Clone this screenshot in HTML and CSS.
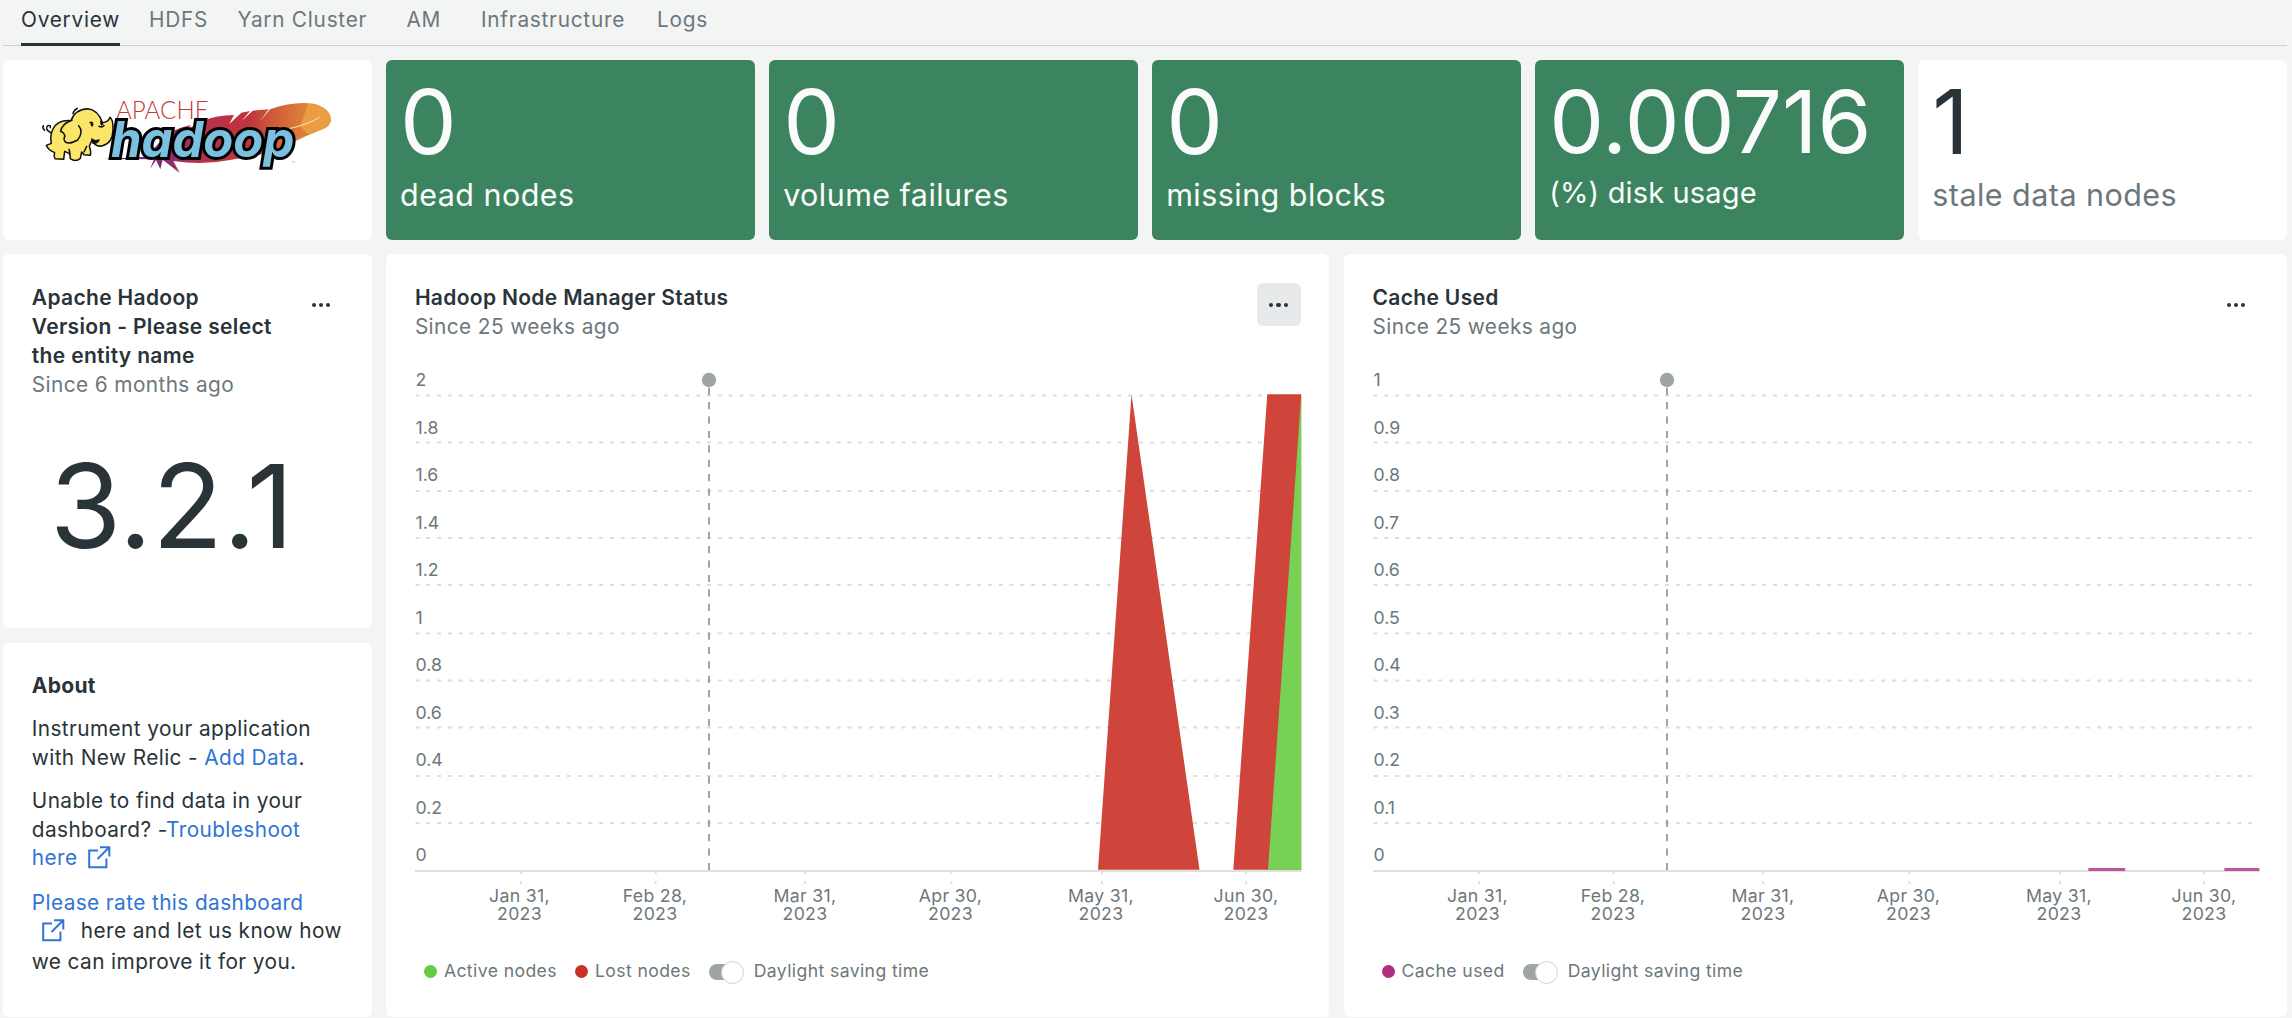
FILE: index.html
```html
<!DOCTYPE html>
<html lang="en">
<head>
<meta charset="utf-8">
<title>Hadoop dashboard</title>
<link rel="stylesheet" href="styles.css">
</head>
<body>
<nav class="tabs">
  <a class="tab active">Overview</a><a class="tab">HDFS</a><a class="tab">Yarn Cluster</a><a class="tab">AM</a><a class="tab">Infrastructure</a><a class="tab">Logs</a>
</nav>
<main class="board">
  <section class="row stats">
    <div class="card logo-card">
      <svg class="logo" viewBox="0 0 930 330" role="img" aria-label="Apache Hadoop">
        <defs>
          <linearGradient id="feather" x1="220" y1="0" x2="904" y2="0" gradientUnits="userSpaceOnUse">
            <stop offset="0" stop-color="#5b2c83"/><stop offset=".25" stop-color="#7d2a80"/><stop offset=".4" stop-color="#b52f50"/><stop offset=".64" stop-color="#c0343c"/><stop offset=".74" stop-color="#cf5a38"/><stop offset=".88" stop-color="#dd7f3b"/><stop offset="1" stop-color="#e58f3c"/>
          </linearGradient>
        </defs>
        <path fill="url(#feather)" d="M220 237 L350 230 L418 154 L436 146 L428 154 L450 144 L482 135 L474 146 L520 122 Q560 106 612 105 L598 132 L634 98 L660 93 L634 124 L668 92 L716 88 L690 124 L720 88 Q790 63 850 71 Q899 82 903 119 Q902 140 870 151 Q820 171 790 187 L700 222 L600 240 Q520 256 430 243 L449 279 L398 239 L391 268 L378 240 L360 267 L372 238 Z"/>
        <path fill="#ea9d42" d="M834 71 Q899 78 903 119 Q902 140 870 151 L836 164 L811 139 Z"/>
        <path fill="none" stroke="#f8e4c4" stroke-width="3" d="M770 148 Q835 133 869 112"/>
        <g stroke="#111" stroke-width="4.5" stroke-linejoin="round" stroke-linecap="round">
          <path fill="none" d="M62 158 Q43 147 53 137 Q63 134 61 143 M44 151 Q36 145 40 137 M129 101 Q130 92 139 88 M134 90 L142 85"/>
          <path fill="#fbe66a" d="M123 122 Q134 88 174 86 Q205 90 217 128 Q235 127 240 112 Q250 118 249 150 Q248 190 216 198 Q194 201 186 180 L178 199 Q184 216 181 226 L162 224 L155 216 L151 235 Q137 247 121 236 L119 221 L104 214 L101 238 L75 236 Q70 228 74 218 Q54 210 49 196 L64 190 Q59 166 69 147 Q83 119 123 122 Z"/>
          <path fill="#fbe66a" d="M126 121 Q94 132 92 155 Q100 154 105 168 Q99 178 106 186 Q119 194 143 180 Q162 155 146 137"/>
          <path fill="#111" d="M186 177 Q193 185 207 180 Q200 193 189 189 Z"/>
          <path fill="none" d="M117 208 Q120 214 119 224 M170 199 L162 216 M207 139 Q216 143 222 137 M180 128 Q184 125 187 128 M212 124 L218 133"/>
        </g>
        <ellipse cx="186" cy="133" rx="4" ry="7" fill="#111"/><ellipse cx="215" cy="130" rx="4" ry="7" fill="#111"/>
        <text class="logo-apache" x="258" y="117" textLength="278" lengthAdjust="spacingAndGlyphs">APACHE</text>
        <text class="logo-word" x="243" y="232" textLength="550" lengthAdjust="spacingAndGlyphs">hadoop</text>
        <text class="logo-tm" x="783" y="250">TM</text>
      </svg>
    </div>
    <div class="card stat good"><div class="value">0</div><div class="label">dead nodes</div></div>
    <div class="card stat good"><div class="value">0</div><div class="label">volume failures</div></div>
    <div class="card stat good"><div class="value">0</div><div class="label">missing blocks</div></div>
    <div class="card stat good long"><div class="value">0.00716</div><div class="label">(%) disk usage</div></div>
    <div class="card stat"><div class="value">1</div><div class="label">stale data nodes</div></div>
  </section>
  <section class="row lower">
    <div class="side">
      <div class="card panel">
        <header class="head">
          <div class="titles"><h2>Apache Hadoop<br>Version - Please select<br>the entity name</h2><p class="since">Since 6 months ago</p></div>
          <button class="more" aria-label="More"><i></i><i></i><i></i></button>
        </header>
        <div class="version">3.2.1</div>
      </div>
      <div class="card panel about">
        <h3>About</h3>
        <p>Instrument your application<br>with New Relic - <a>Add Data</a>.</p>
        <p>Unable to find data in your<br>dashboard? -<a>Troubleshoot<br>here <svg class="ext" viewBox="0 0 23 23"><path d="M10 4.5H1.2V21.3H18.4V12.5M12 1.2H21.3V10.5M21 1.5L9.5 13"/></svg></a></p>
        <p class="rate"><a>Please rate this dashboard<br><svg class="ext lead" viewBox="0 0 23 23"><path d="M10 4.5H1.2V21.3H18.4V12.5M12 1.2H21.3V10.5M21 1.5L9.5 13"/></svg></a><span class="after">here and let us know how</span><br><span class="last">we can improve it for you.</span></p>
      </div>
    </div>
    <div class="card panel">
      <header class="head">
        <div class="titles"><h2>Hadoop Node Manager Status</h2><p class="since">Since 25 weeks ago</p></div>
        <button class="more hover" aria-label="More"><i></i><i></i><i></i></button>
      </header>
      <svg class="chart" viewBox="415 370 887 560">
        <defs>
          <g id="frame">
            <path class="grid" d="M415.500 395.500H1294M415.500 442.500H1294M415.500 491H1294M415.500 538H1294M415.500 585H1294M415.500 633.500H1294M415.500 680.500H1294M415.500 727.500H1294M415.500 776H1294M415.500 823H1294"/>
            <path class="axis" d="M415 871H1301.500M521 871V874M521 881V884M655.600 871V874M655.600 881V884M805.200 871V874M805.200 881V884M951.400 871V874M951.400 881V884M1102 871V874M1102 881V884M1246.200 871V874M1246.200 881V884"/>
            <path class="marker" d="M709 387.700V870"/>
            <circle class="marker-dot" cx="709" cy="380" r="7.200"/>
          </g>
        </defs>
        <use href="#frame"/>
        <path class="lost" d="M1098 869.700L1131.500 394.500L1199.500 869.700ZM1233.300 869.700L1267.300 394.300H1301.200V869.700Z"/>
        <path class="active-area" d="M1268 869.700L1301.200 395V869.700Z"/>
        <g class="y">
          <text x="415.500" y="386">2</text><text x="415.500" y="434">1.8</text><text x="415.500" y="481">1.6</text><text x="415.500" y="529">1.4</text><text x="415.500" y="576">1.2</text><text x="415.500" y="624">1</text><text x="415.500" y="671">0.8</text><text x="415.500" y="719">0.6</text><text x="415.500" y="766">0.4</text><text x="415.500" y="814">0.2</text><text x="415.500" y="861">0</text>
        </g>
        <g class="x">
          <text x="519.500" y="902">Jan 31,</text><text x="519.500" y="920">2023</text>
          <text x="655" y="902">Feb 28,</text><text x="655" y="920">2023</text>
          <text x="805" y="902">Mar 31,</text><text x="805" y="920">2023</text>
          <text x="950.500" y="902">Apr 30,</text><text x="950.500" y="920">2023</text>
          <text x="1101" y="902">May 31,</text><text x="1101" y="920">2023</text>
          <text x="1246" y="902">Jun 30,</text><text x="1246" y="920">2023</text>
        </g>
      </svg>
      <div class="legend">
        <span class="item green">Active nodes</span><span class="item red">Lost nodes</span><span class="toggle"></span><span>Daylight saving time</span>
      </div>
    </div>
    <div class="card panel">
      <header class="head">
        <div class="titles"><h2>Cache Used</h2><p class="since">Since 25 weeks ago</p></div>
        <button class="more" aria-label="More"><i></i><i></i><i></i></button>
      </header>
      <svg class="chart" viewBox="415 370 887 560">
        <use href="#frame"/>
        <path class="cache" d="M1130.300 869.500H1167.200M1266.300 869.500H1301.300"/>
        <g class="y">
          <text x="415.500" y="386">1</text><text x="415.500" y="434">0.9</text><text x="415.500" y="481">0.8</text><text x="415.500" y="529">0.7</text><text x="415.500" y="576">0.6</text><text x="415.500" y="624">0.5</text><text x="415.500" y="671">0.4</text><text x="415.500" y="719">0.3</text><text x="415.500" y="766">0.2</text><text x="415.500" y="814">0.1</text><text x="415.500" y="861">0</text>
        </g>
        <g class="x">
          <text x="519.500" y="902">Jan 31,</text><text x="519.500" y="920">2023</text>
          <text x="655" y="902">Feb 28,</text><text x="655" y="920">2023</text>
          <text x="805" y="902">Mar 31,</text><text x="805" y="920">2023</text>
          <text x="950.500" y="902">Apr 30,</text><text x="950.500" y="920">2023</text>
          <text x="1101" y="902">May 31,</text><text x="1101" y="920">2023</text>
          <text x="1246" y="902">Jun 30,</text><text x="1246" y="920">2023</text>
        </g>
      </svg>
      <div class="legend">
        <span class="item pink">Cache used</span><span class="toggle"></span><span>Daylight saving time</span>
      </div>
    </div>
  </section>
</main>
</body>
</html>
```
FILE: styles.css
```css
* { box-sizing: border-box; }
body {
  margin: 0;
  height: 1018px;
  overflow: hidden;
  padding: 0 5px 0 3px;
  background: #f3f5f4;
  color: #293338;
  font: 400 20.8px/28.8px Inter, "Liberation Sans", sans-serif;
  letter-spacing: .4px;
}
h2, h3, p { margin: 0; font-size: inherit; }
h2 { font-weight: 600; font-size: 21px; letter-spacing: .33px; }
h3 { font-weight: 700; font-size: 21px; letter-spacing: .3px; }
a { color: #2f74d6; }

.tabs {
  display: grid;
  grid-template-columns: 128px 88.5px 169px 74.5px 176px auto;
  height: 46px;
  padding-left: 18px;
  border-bottom: 1px solid #cdd1d1;
  letter-spacing: .75px;
}
.tab { justify-self: start; height: 46px; padding-top: 6px; color: #6d777c; white-space: nowrap; }
.tab.active { color: #293338; border-bottom: 3px solid #293338; }

.board { display: flex; flex-direction: column; gap: 14.4px; padding-top: 14px; }
.row { display: grid; gap: 14.4px; }
.stats { grid-template-columns: repeat(6, 1fr); height: 180px; }
.lower { grid-template-columns: 368.7px 1fr 1fr; height: 762.6px; }
.side { display: grid; grid-template-rows: 1fr 1fr; gap: 14.4px; min-height: 0; }
.card { background: #fff; border-radius: 6px; min-width: 0; min-height: 0; }

.logo-card { padding: 20px 27px; }
.logo { display: block; width: 310px; height: 110px; }
.logo-apache { font: 300 74px Lato, sans-serif; fill: #c43a3a; letter-spacing: 0; }
.logo-word {
  font: italic 700 148px Inter, sans-serif; letter-spacing: 0;
  fill: #7cc0e0; stroke: #000; stroke-width: 18px; paint-order: stroke;
}
.logo-tm { font: 8px Inter, sans-serif; fill: #7cc0e0; }

.stat { padding: 14px 14px 0; white-space: nowrap; }
.value { font-size: 90px; line-height: 96px; letter-spacing: 0; }
.label { margin-top: 7px; font-size: 30.5px; line-height: 36px; letter-spacing: .45px; color: #6d777c; }
.good { background: #3c845f; }
.good .value, .good .label { color: #fafcfb; }
.long .value { font-size: 87px; }
.long .label { font-size: 29px; letter-spacing: .15px; margin-top: 5px; }

.panel { padding: 28.8px; }
.head { display: flex; justify-content: space-between; align-items: flex-start; }
.titles { margin: 1px 0 -1px; white-space: nowrap; }
.since { color: #6d777c; }
.more {
  flex: none; display: flex; gap: 3px; justify-content: center; align-items: center;
  width: 44px; height: 43px; padding: 0; border: 0; border-radius: 6px; background: none;
}
.more.hover { background: #e7e9ea; }
.more i { width: 4.2px; height: 4.2px; border-radius: 50%; background: #293338; }
.version { margin-top: 38px; padding-left: 18px; font-size: 116px; line-height: 140px; letter-spacing: 0; }

.about p { margin-top: 14.4px; white-space: nowrap; }
.about .rate { margin-top: 15.4px; }
.ext { width: 23px; height: 23px; margin: 0 0 -4px 4px; overflow: visible; }
.ext.lead { margin-left: 10px; }
.ext path { fill: none; stroke: #2f74d6; stroke-width: 2; }
.after { margin-left: 16px; }
.last { position: relative; top: 2px; }

.chart { display: block; width: 887px; height: 560px; margin-top: 29px; font-size: 17.7px; letter-spacing: 0; fill: #6d777c; }
.grid { fill: none; stroke: #dcdede; stroke-width: 1.8; stroke-dasharray: 4 6.8; }
.axis { fill: none; stroke: #dfe0e0; stroke-width: 2; }
.marker { fill: none; stroke: #9fa5a5; stroke-width: 2; stroke-dasharray: 7.2 7.2; }
.marker-dot { fill: #9fa5a5; }
.lost { fill: #d0453b; }
.active-area { fill: #77d154; }
.cache { fill: none; stroke: #c0559b; stroke-width: 2.8; }
.x { text-anchor: middle; letter-spacing: .3px; }

.legend { display: flex; align-items: center; height: 28px; margin-top: 28px; padding-left: 9px; font-size: 17.6px; color: #6d777c; }
.item { display: flex; align-items: center; gap: 7px; margin-right: 18px; }
.item::before { content: ""; width: 13px; height: 13px; border-radius: 50%; background: currentColor; }
.green::before { background: #66cb40; }
.red::before { background: #c93126; }
.pink::before { background: #b12b80; }
.toggle { position: relative; width: 35px; height: 16px; margin-right: 10px; border-radius: 8px; background: linear-gradient(90deg, #9fa5a5 26px, transparent 26px); }
.toggle::after { content: ""; position: absolute; right: 0; top: -3px; width: 21px; height: 21px; border: 1px solid #cfd2d2; border-radius: 50%; background: #fff; }
```
